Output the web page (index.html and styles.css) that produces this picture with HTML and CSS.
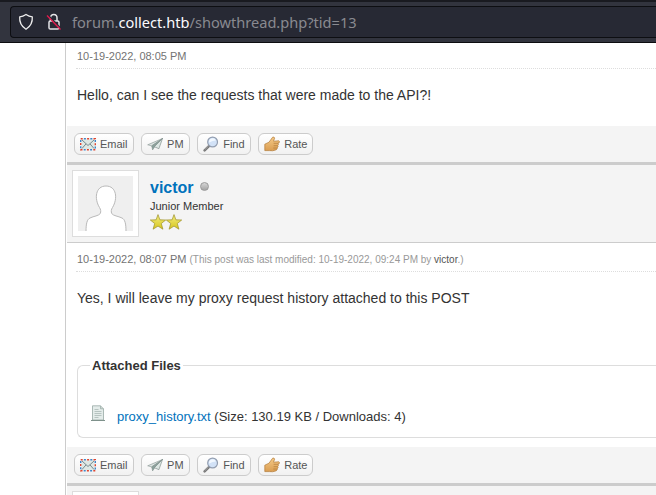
FILE: index.html
```
<!DOCTYPE html>
<html lang="en">
<head>
<meta charset="utf-8">
<title>Forum thread</title>
<link rel="stylesheet" href="styles.css">
</head>
<body>
<svg class="defs" aria-hidden="true">
  <defs>
    <linearGradient id="gold" x1="0" y1="0" x2="0" y2="1"><stop offset="0" stop-color="#f4ee80"/><stop offset="1" stop-color="#d6c51c"/></linearGradient>
    <linearGradient id="skin" x1="0" y1="0" x2="0" y2="1"><stop offset="0" stop-color="#f6cb88"/><stop offset="1" stop-color="#d99c50"/></linearGradient>
  </defs>
  <symbol id="email" viewBox="0 0 16 16">
    <rect x=".7" y="2.7" width="14.6" height="11" fill="#dfe8e4" stroke="#f1f4f4" stroke-width="1.4"/>
    <rect x=".7" y="2.7" width="14.6" height="11" fill="none" stroke="#e0442f" stroke-width="1.4" stroke-dasharray="2 4.4"/>
    <rect x=".7" y="2.7" width="14.6" height="11" fill="none" stroke="#3f86c8" stroke-width="1.4" stroke-dasharray="2 4.4" stroke-dashoffset="-3.2"/>
    <path d="M2 4l6 5.500 6-5.500M2 12.500l4-4.600M14 12.500l-4-4.600" fill="none" stroke="#6d8085" stroke-width=".9"/>
  </symbol>
  <symbol id="plane" viewBox="0 0 16 16">
    <path d="M15.500 2.500L.7 8.800l4 1.100z" fill="#dfe7e5" stroke="#84928f" stroke-width=".6" stroke-linejoin="round"/>
    <path d="M15.500 2.500L4.700 9.900l.9 4 2-2.900z" fill="#8ba19c" stroke="#7c8c88" stroke-width=".5" stroke-linejoin="round"/>
    <path d="M15.500 2.500L7.300 10.700l4.600 2z" fill="#dce6e3" stroke="#748380" stroke-width=".6" stroke-linejoin="round"/>
  </symbol>
  <symbol id="find" viewBox="0 0 16 16">
    <path d="M6.200 9.800L1.600 14.400" stroke="#777" stroke-width="2.400" stroke-linecap="round"/>
    <path d="M5.500 10L1.700 13.800" stroke="#b4b4b4" stroke-width=".8"/>
    <circle cx="9.600" cy="6" r="4.900" fill="#d2e2f7" stroke="#939eb0" stroke-width="1.200"/>
    <path d="M6.200 6.600a3.500 3.500 0 016.600-2.200q-3 0-6.600 2.200" fill="#f2f8ff"/>
  </symbol>
  <symbol id="rate" viewBox="0 0 16 16">
    <path d="M.8 8.200L5 6.200 8.600 1.200q1.700-.8 2 1L9.500 5.200l5.300-.4q1.300.6.3 2l-1.200.3q1.200 1.200-.2 2.400 1 1.200-.5 2.300.3 1.300-1 2-3.600 1.500-6.800.8L.8 14.600z" fill="url(#skin)" stroke="#b17a36" stroke-width=".7" stroke-linejoin="round"/>
    <path d="M9.600 7.300h4.200M9.600 9.700h3.800M9.300 12h3.400" stroke="#a87233" stroke-width=".6"/>
  </symbol>
  <symbol id="star" viewBox="0 0 16 16">
    <path d="M8 .6l1.900 5.200 5.800.2-4.400 3.500 1.600 5.700L8 12.100 3.100 15.200l1.600-5.700L.3 6l5.800-.2z" fill="url(#gold)" stroke="#9c8f2a" stroke-width=".7" stroke-linejoin="round"/>
  </symbol>
</svg>
<header class="toolbar">
  <div class="address">
    <svg class="shield" viewBox="0 0 16 18"><path d="M8 1.500q3 2 6.300 2.300.6 8.200-6.300 12.500Q1.100 12 1.700 3.800 5 3.500 8 1.500z" fill="none" stroke="#eee" stroke-width="1.300" stroke-linejoin="round"/></svg>
    <svg class="lock" viewBox="0 0 16 18"><path d="M4.500 8V5q0-3.400 3.300-3.400T11 5v3" fill="none" stroke="#e5e5e8" stroke-width="1.500"/><rect x="3" y="8" width="10" height="8" rx="1.300" fill="none" stroke="#e5e5e8" stroke-width="1.500"/><path d="M2.500 2.500l13 13.500" stroke="#272934" stroke-width="1.500"/><path d="M1 2.500l13.500 14" stroke="#e5194d" stroke-width="1.300"/></svg>
    <span class="url">forum.<b>collect.htb</b>/showthread.php?tid=13</span>
  </div>
</header>
<main class="thread">
  <article>
    <div class="content first">
      <div class="date">10-19-2022, 08:05 PM</div>
      <p class="message">Hello, can I see the requests that were made to the API?!</p>
    </div>
    <div class="controls">
      <a class="button"><svg><use href="#email"/></svg>Email</a>
      <a class="button"><svg><use href="#plane"/></svg>PM</a>
      <a class="button"><svg><use href="#find"/></svg>Find</a>
      <a class="button"><svg><use href="#rate"/></svg>Rate</a>
    </div>
  </article>
  <article>
    <div class="author">
      <div class="avatar"><svg viewBox="0 0 55 55"><rect width="55" height="55" fill="#efefef"/><path d="M8 55.500c0-8 1-12 4-13.500 4-2 8.500-2 10.300-4.500.8-2 .5-4-.8-6-5.500-9-4-21.500 6.500-21.500s12 12.500 6.500 21.500c-1.300 2-1.600 4-.8 6 1.800 2.500 6.300 2.500 10.300 4.500 3 1.500 4 5.500 4 13.500z" fill="#fff" stroke="#b9b9b9"/></svg></div>
      <div class="info">
        <div class="name">victor <i class="offline"></i></div>
        <div class="rank">Junior Member</div>
        <div class="stars"><svg><use href="#star"/></svg><svg><use href="#star"/></svg></div>
      </div>
    </div>
    <div class="content second">
      <div class="date">10-19-2022, 08:07 PM <span class="edited">(This post was last modified: 10-19-2022, 09:24 PM by <a>victor</a>.)</span></div>
      <p class="message">Yes, I will leave my proxy request history attached to this POST</p>
      <fieldset class="files">
        <legend>Attached Files</legend>
        <div class="file">
          <svg viewBox="0 0 16 16"><path d="M2.500.8h8l3 3v11.200h-11z" fill="#e4ecea" stroke="#98a9a4" stroke-width=".8"/><path d="M10.500.8v3h3" fill="#cad5d2" stroke="#9aaaa5" stroke-width=".7"/><path d="M4.500 4.500h4M4.500 6.500h7M4.500 8.500h7M4.500 10.500h7M4.500 12.500h4" stroke="#b0bebb" stroke-width=".9"/><path d="M1 15.500h14" stroke="#7e918b"/></svg>
          <span><a>proxy_history.txt</a> (Size: 130.19 KB / Downloads: 4)</span>
        </div>
      </fieldset>
    </div>
    <div class="controls">
      <a class="button"><svg><use href="#email"/></svg>Email</a>
      <a class="button"><svg><use href="#plane"/></svg>PM</a>
      <a class="button"><svg><use href="#find"/></svg>Find</a>
      <a class="button"><svg><use href="#rate"/></svg>Rate</a>
    </div>
  </article>
  <article class="next"><div class="author"><div class="avatar"></div></div></article>
</main>
</body>
</html>
```
FILE: styles.css
```
* { box-sizing: border-box; }
body {
  margin: 0;
  height: 495px;
  overflow: hidden;
  display: flex;
  flex-direction: column;
  background: #fff;
  color: #333;
  font-family: "Liberation Sans", Arial, sans-serif;
}
.defs { position: absolute; width: 0; height: 0; }
.toolbar {
  flex: none;
  height: 43px;
  padding: 4px 0 3px 10px;
  background: #32343e;
  border-top: 2px solid #191a20;
  border-bottom: 1px solid #0c0c0f;
}
.address {
  height: 32px;
  display: flex;
  align-items: center;
  padding-left: 7px;
  background: #272934;
  border: 1px solid #0d0e12;
  border-right: 0;
  border-radius: 4px 0 0 4px;
}
.address svg { width: 16px; height: 18px; }
.lock { margin-left: 12px; }
.url {
  margin-left: 10px;
  color: #898a90;
  font: 14.6px/30px "Noto Sans", sans-serif;
  white-space: nowrap;
}
.url b { color: #fbfbfe; font-weight: 400; }
.thread {
  flex: none;
  height: 452px;
  overflow: hidden;
  margin-left: 65px;
  padding-left: 1px;
  border-left: 1px solid #ccc;
}
.content { padding: 0 0 0 10px; }
.first { height: 83px; padding-top: 1px; }
.second { height: 204px; padding-top: 4px; }
.date {
  height: 25px;
  line-height: 25px;
  font-size: 11px;
  color: #737373;
  border-bottom: 1px dotted #ddd;
  margin-left: -1px;
  padding-left: 1px;
}
.edited { font-size: 10px; color: #999; }
.edited a { color: #555; }
.message { margin: 16px 0 0; font-size: 14px; line-height: 20px; }
.controls {
  height: 39px;
  display: flex;
  gap: 7.6px;
  padding: 7px 0 0 7px;
  background: #f4f4f4;
  border-bottom: 3px solid #ccc;
}
.button {
  height: 22px;
  display: flex;
  align-items: center;
  gap: 4px;
  padding: 0 5px;
  border: 1px solid #ccc;
  border-radius: 6px;
  background: linear-gradient(#fff, #f1f1f1);
  color: #555;
  font-size: 11px;
  line-height: 18px;
}
.button svg { width: 16px; height: 16px; }
.author {
  height: 78px;
  display: flex;
  padding: 5px;
  background: #f4f4f4;
  border-bottom: 1px solid #ccc;
}
.next .author { height: 9px; border-bottom: 0; }
.avatar {
  flex: none;
  width: 67px;
  height: 67px;
  padding: 5px;
  background: #fff;
  border: 1px solid #ddd;
}
.next .avatar { height: 4px; padding: 0; border-bottom: 0; }
.avatar svg { display: block; width: 55px; height: 55px; }
.info { padding: 8px 0 0 11px; }
.name {
  display: flex;
  align-items: center;
  gap: 6px;
  height: 20px;
  font-size: 16px;
  font-weight: 700;
  color: #0072bc;
}
.offline {
  width: 9px;
  height: 9px;
  margin-top: -3px;
  border: 1px solid #999;
  border-radius: 50%;
  background: linear-gradient(#d6d6d6, #a4a4a4);
}
.rank { font-size: 11px; line-height: 16px; }
.stars { display: flex; }
.stars svg { width: 16px; height: 16px; }
.files {
  height: 80px;
  margin: 50px -2px 0 0;
  padding: 0 0 0 12px;
  border: 1px solid #ddd;
  border-right: 0;
  border-radius: 6px 0 0 6px;
}
.files legend {
  padding: 0 2px;
  font-size: 13px;
  font-weight: 700;
  line-height: 15px;
}
.file {
  display: flex;
  gap: 11px;
  margin-top: 32px;
  font-size: 13px;
  line-height: 24px;
}
.file svg { width: 16px; height: 16px; }
.file a { color: #0072bc; }
```
